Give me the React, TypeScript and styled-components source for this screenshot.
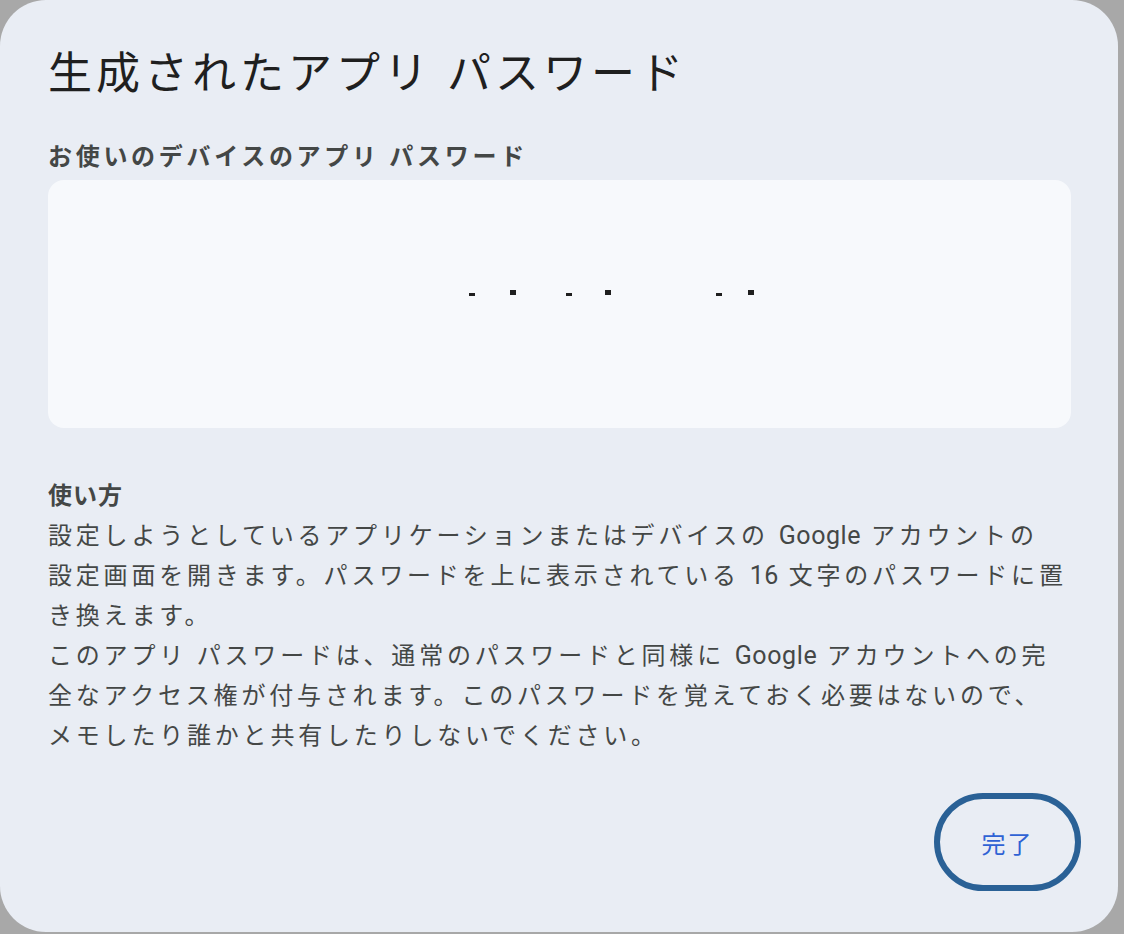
import React from "react";
import styled, { createGlobalStyle } from "styled-components";

const Global = createGlobalStyle`
  html, body {
    margin: 0;
    padding: 0;
    background: #a8a8a8;
    width: 1124px;
    height: 934px;
    overflow: hidden;
  }
  body {
    font-family: Roboto, "Noto Sans CJK JP", sans-serif;
  }
`;

const Dialog = styled.div`
  box-sizing: border-box;
  width: 1118px;
  height: 932px;
  background: #e9edf4;
  border-radius: 46px;
  padding: 46px 47px 0 48px;
  display: flex;
  flex-direction: column;
`;

const Title = styled.h1`
  margin: 0;
  font-size: 44px;
  line-height: 56px;
  font-weight: 400;
  letter-spacing: 4px;
  color: #1f1f1f;
`;

const Label = styled.div`
  margin-top: 40px;
  font-size: 24px;
  line-height: 30px;
  font-weight: 700;
  letter-spacing: 3.7px;
  color: #444746;
`;

const PasswordBox = styled.div`
  margin-top: 8px;
  height: 248px;
  background: #f7f9fc;
  border-radius: 16px;
  display: flex;
  align-items: center;
  padding-left: 421px;
  padding-bottom: 24px;
  box-sizing: border-box;
`;

const Dot = styled.span<{ $offset: number; $tall?: boolean }>`
  display: block;
  width: 6px;
  height: ${(p) => (p.$tall ? 5 : 3)}px;
  margin-left: ${(p) => p.$offset}px;
  margin-top: ${(p) => (p.$tall ? 0 : 4)}px;
  background: #1f1f1f;
`;

const Section = styled.div`
  margin-top: 48px;
  display: flex;
  flex-direction: column;
`;

const SectionTitle = styled.div`
  font-size: 24px;
  line-height: 40px;
  font-weight: 700;
  letter-spacing: 1px;
  color: #444746;
`;

const Paragraph = styled.p`
  margin: 0;
  font-size: 24px;
  line-height: 40px;
  font-weight: 400;
  letter-spacing: 3.8px;
  color: #444746;
  white-space: nowrap;
`;

const Latin = styled.span`
  letter-spacing: 0.6px;
  font-size: 25px;
`;

const Footer = styled.div`
  margin-top: 37px;
  display: flex;
  justify-content: flex-end;
`;

const DoneButton = styled.button`
  box-sizing: border-box;
  width: 147px;
  height: 98px;
  margin-right: -10px;
  border: 6px solid #2a6196;
  border-radius: 49px;
  background: transparent;
  color: #2f62d4;
  font-family: Roboto, "Noto Sans CJK JP", sans-serif;
  font-size: 24px;
  letter-spacing: 2px;
  cursor: pointer;
`;

const dots: { offset: number; tall?: boolean }[] = [
  { offset: 0 },
  { offset: 35, tall: true },
  { offset: 50 },
  { offset: 33, tall: true },
  { offset: 105 },
  { offset: 26, tall: true },
];

export default function App() {
  return (
    <>
      <Global />
      <Dialog>
        <Title>生成されたアプリ パスワード</Title>
        <Label>お使いのデバイスのアプリ パスワード</Label>
        <PasswordBox>
          {dots.map((d, i) => (
            <Dot key={i} $offset={d.offset} $tall={d.tall} />
          ))}
        </PasswordBox>
        <Section>
          <SectionTitle>使い方</SectionTitle>
          <Paragraph>
            設定しようとしているアプリケーションまたはデバイスの <Latin>Google</Latin> アカウントの
            <br />
            設定画面を開きます。パスワードを上に表示されている <Latin>16</Latin> 文字のパスワードに置
            <br />
            き換えます。
          </Paragraph>
          <Paragraph>
            このアプリ パスワードは、通常のパスワードと同様に <Latin>Google</Latin> アカウントへの完
            <br />
            全なアクセス権が付与されます。このパスワードを覚えておく必要はないので、
            <br />
            メモしたり誰かと共有したりしないでください。
          </Paragraph>
        </Section>
        <Footer>
          <DoneButton>完了</DoneButton>
        </Footer>
      </Dialog>
    </>
  );
}
